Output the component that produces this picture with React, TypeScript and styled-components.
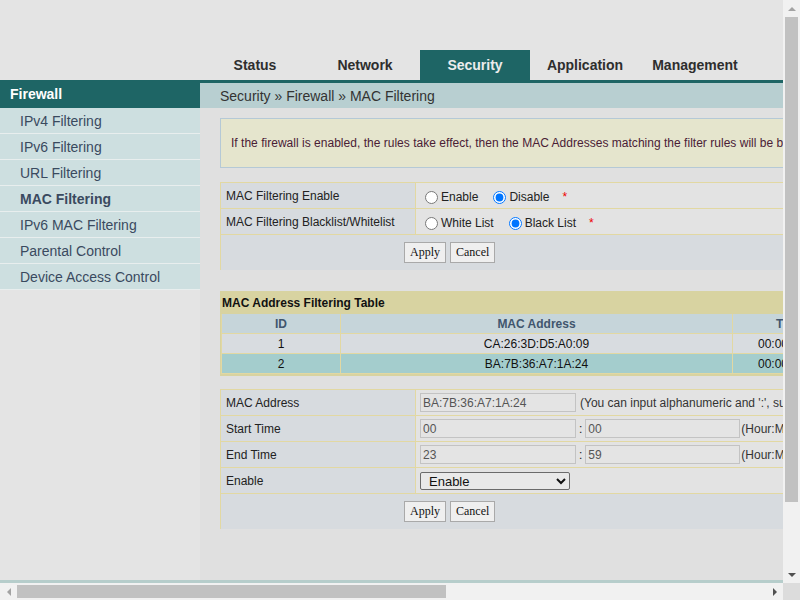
import React from 'react'
import styled, { createGlobalStyle } from 'styled-components'

const TEAL = '#1e6565'
const TAN = '#e2d8a2'

const GlobalStyle = createGlobalStyle`
  html, body {
    margin: 0;
    padding: 0;
    overflow: hidden;
  }
  body {
    background: #e4e4e4;
    font-family: 'Liberation Sans', Arial, sans-serif;
    font-size: 12px;
    color: #222;
  }
`

/* window frame: visible page + classic scrollbars */
const Frame = styled.div`
  width: 800px;
  height: 600px;
  display: grid;
  grid-template-columns: 783px 17px;
  grid-template-rows: 583px 17px;
`

const Viewport = styled.div`
  overflow: hidden;
`

const VScroll = styled.div`
  background: #f1f1f1;
  display: flex;
  flex-direction: column;
`

const HScroll = styled.div`
  background: #f1f1f1;
  display: flex;
`

const Corner = styled.div`
  background: #dcdcdc;
`

const ArrowBtn = styled.div`
  width: 17px;
  height: 17px;
  flex-shrink: 0;
  display: flex;
  align-items: center;
  justify-content: center;
`

const VTrack = styled.div`
  flex: 1;
  padding: 0 2px;
`

const HTrack = styled.div`
  flex: 1;
  padding: 2px 0;
`

const VThumb = styled.div<{ $len: number }>`
  height: ${({ $len }) => $len}px;
  background: #c1c1c1;
`

const HThumb = styled.div<{ $len: number }>`
  width: ${({ $len }) => $len}px;
  height: 100%;
  background: #c1c1c1;
`

const Page = styled.div`
  width: 1377px;
  display: flex;
  flex-direction: column;
`

const LogoBar = styled.div`
  height: 50px;
`

const NavBar = styled.div`
  display: flex;
  height: 30px;
  padding-left: 200px;
`

const NavTab = styled.div<{ $active?: boolean }>`
  width: 110px;
  display: flex;
  align-items: center;
  justify-content: center;
  font-size: 14px;
  font-weight: bold;
  color: ${({ $active }) => ($active ? '#ececec' : '#2e2e2e')};
  background: ${({ $active }) => ($active ? TEAL : 'transparent')};
`

const Body = styled.div`
  display: flex;
  min-height: 500px;
`

const Sidebar = styled.div`
  width: 200px;
  flex-shrink: 0;
  background: #e4e4e4;
`

const SideHeader = styled.div`
  height: 28px;
  background: ${TEAL};
  color: #fff;
  font-weight: bold;
  font-size: 14px;
  padding-left: 10px;
  display: flex;
  align-items: center;
`

const SideItem = styled.div<{ $active?: boolean }>`
  height: 25px;
  border-bottom: 1px solid #e8eeee;
  background: #cddfe0;
  padding-left: 20px;
  display: flex;
  align-items: center;
  font-size: 14px;
  color: #3a4a5f;
  font-weight: ${({ $active }) => ($active ? 'bold' : 'normal')};
`

const Main = styled.div`
  flex: 1;
  background: #e0e0e0;
  border-top: 3px solid ${TEAL};
  padding-bottom: 50px;
`

const Crumb = styled.div`
  height: 25px;
  background: #b8cfd1;
  padding-left: 20px;
  display: flex;
  align-items: center;
  font-size: 14px;
  color: #333;
`

const Content = styled.div`
  padding: 10px 20px 0;
  display: flex;
  flex-direction: column;
`

const InfoBox = styled.div`
  height: 48px;
  border: 1px solid #b5c9d6;
  background: #e5e5cd;
  color: #4a2035;
  padding-left: 10px;
  display: flex;
  align-items: center;
  letter-spacing: 0.02px;
`

const FormGrid = styled.div<{ $gap: number }>`
  margin-top: ${({ $gap }) => $gap}px;
  display: grid;
  grid-template-columns: 195px 1fr;
  border-top: 1px solid ${TAN};
  border-left: 1px solid ${TAN};
`

const LabelCell = styled.div`
  height: 26px;
  box-sizing: border-box;
  border-bottom: 1px solid ${TAN};
  border-right: 1px solid ${TAN};
  background: #d7dbdf;
  padding-left: 5px;
  display: flex;
  align-items: center;
`

const ValueCell = styled.div`
  height: 26px;
  box-sizing: border-box;
  border-bottom: 1px solid ${TAN};
  background: #e3e3e3;
  padding-left: 4px;
  display: flex;
  align-items: center;
  white-space: nowrap;
`

const RadioLabel = styled.label`
  display: inline-flex;
  align-items: center;
  margin-right: 10px;
  padding-top: 3px;
  input {
    margin: 0 3px 0 5px;
  }
`

const Star = styled.span`
  color: #e00;
  margin-left: 3px;
  padding-top: 3px;
`

const ButtonRow = styled.div`
  grid-column: 1 / -1;
  height: 35px;
  background: #d7dbdf;
  padding-left: 183px;
  display: flex;
  align-items: center;
  gap: 4px;
`

const Btn = styled.button`
  height: 21px;
  padding: 0 5px;
  border: 1px solid #a9a9a9;
  background: #efefef;
  font-family: 'Liberation Serif', 'Times New Roman', serif;
  font-size: 12px;
  color: #111;
`

const MacBox = styled.div`
  margin-top: 21px;
  background: #d8d3a1;
  padding: 0 0 2px 1px;
`

const MacTitle = styled.div`
  height: 23px;
  padding-left: 1px;
  display: flex;
  align-items: center;
  font-weight: bold;
  color: #111;
`

const MacTable = styled.table`
  width: 100%;
  border-collapse: collapse;
  table-layout: fixed;
`

const HeadCell = styled.th<{ $w?: number }>`
  width: ${({ $w }) => ($w ? `${$w}px` : 'auto')};
  height: 19px;
  padding: 0;
  border: 1px solid ${TAN};
  border-top: none;
  background: #c6d5da;
  color: #41566e;
  font-weight: bold;
  text-align: center;
`

const DataRow = styled.tr<{ $selected?: boolean }>`
  background: ${({ $selected }) => ($selected ? '#a4cdcd' : '#d8dce0')};
`

const DataCell = styled.td`
  height: 19px;
  padding: 0;
  border: 1px solid ${TAN};
  text-align: center;
  color: #111;
`

const TextInput = styled.input<{ $w: number }>`
  width: ${({ $w }) => $w}px;
  height: 19px;
  box-sizing: border-box;
  margin: 0;
  padding: 0 2px;
  border: 1px solid #c3c3c3;
  background: #e4e4e4;
  color: #555;
  font-family: 'Liberation Sans', Arial, sans-serif;
  font-size: 12px;
  outline: none;
`

const Hint = styled.span<{ $tight?: boolean }>`
  margin-left: ${({ $tight }) => ($tight ? 1 : 4)}px;
  color: #333;
`

const Colon = styled.span`
  margin: 0 3px;
`

const Select = styled.select`
  width: 150px;
  height: 18px;
  margin: 0;
  border: 1px solid #6b6b6b;
  border-radius: 2px;
  background: #e9e9e9;
  color: #111;
  font-family: 'Liberation Sans', Arial, sans-serif;
  font-size: 13px;
  padding: 0 4px;
`

const Footer = styled.div`
  height: 84px;
  box-sizing: border-box;
  border-top: 3px solid #b6cdcb;
  background: #e4e4e4;
`

const tabs = ['Status', 'Network', 'Security', 'Application', 'Management']
const menu = [
  'IPv4 Filtering',
  'IPv6 Filtering',
  'URL Filtering',
  'MAC Filtering',
  'IPv6 MAC Filtering',
  'Parental Control',
  'Device Access Control',
]
const rules = [
  { id: 1, mac: 'CA:26:3D:D5:A0:09', time: '00:00-23:59' },
  { id: 2, mac: 'BA:7B:36:A7:1A:24', time: '00:00-23:59' },
]

const noop = () => {}

type Dir = 'up' | 'down' | 'left' | 'right'
const arrowPts: Record<Dir, string> = {
  up: '0,4 4,0 8,4',
  down: '0,0 8,0 4,4',
  left: '4,0 4,8 0,4',
  right: '0,0 0,8 4,4',
}

const Arrow = ({ dir, active }: { dir: Dir; active?: boolean }) => {
  const vertical = dir === 'up' || dir === 'down'
  return (
    <ArrowBtn>
      <svg width={vertical ? 8 : 4} height={vertical ? 4 : 8} viewBox={vertical ? '0 0 8 4' : '0 0 4 8'}>
        <polygon points={arrowPts[dir]} fill={active ? '#505050' : '#a3a3a3'} />
      </svg>
    </ArrowBtn>
  )
}

export default function App() {
  return (
    <>
      <GlobalStyle />
      <Frame>
        <Viewport>
          <Page>
            <LogoBar />
            <NavBar>
              {tabs.map((t) => (
                <NavTab key={t} $active={t === 'Security'}>
                  {t}
                </NavTab>
              ))}
            </NavBar>
            <Body>
              <Sidebar>
                <SideHeader>Firewall</SideHeader>
                {menu.map((m) => (
                  <SideItem key={m} $active={m === 'MAC Filtering'}>
                    {m}
                  </SideItem>
                ))}
              </Sidebar>
              <Main>
                <Crumb>Security » Firewall » MAC Filtering</Crumb>
                <Content>
                  <InfoBox>
                    If the firewall is enabled, the rules take effect, then the MAC Addresses matching the filter rules will be banned from accessing the Internet.
                  </InfoBox>

                  <FormGrid $gap={14}>
                    <LabelCell>MAC Filtering Enable</LabelCell>
                    <ValueCell>
                      <RadioLabel>
                        <input type="radio" name="en" checked={false} onChange={noop} />
                        Enable
                      </RadioLabel>
                      <RadioLabel>
                        <input type="radio" name="en" checked onChange={noop} />
                        Disable
                      </RadioLabel>
                      <Star>*</Star>
                    </ValueCell>
                    <LabelCell>MAC Filtering Blacklist/Whitelist</LabelCell>
                    <ValueCell>
                      <RadioLabel>
                        <input type="radio" name="mode" checked={false} onChange={noop} />
                        White List
                      </RadioLabel>
                      <RadioLabel>
                        <input type="radio" name="mode" checked onChange={noop} />
                        Black List
                      </RadioLabel>
                      <Star>*</Star>
                    </ValueCell>
                    <ButtonRow>
                      <Btn>Apply</Btn>
                      <Btn>Cancel</Btn>
                    </ButtonRow>
                  </FormGrid>

                  <MacBox>
                    <MacTitle>MAC Address Filtering Table</MacTitle>
                    <MacTable>
                      <thead>
                        <tr>
                          <HeadCell $w={118}>ID</HeadCell>
                          <HeadCell $w={391}>MAC Address</HeadCell>
                          <HeadCell $w={114}>Time</HeadCell>
                          <HeadCell $w={200}>Enable</HeadCell>
                          <HeadCell>Modify</HeadCell>
                        </tr>
                      </thead>
                      <tbody>
                        {rules.map((r) => (
                          <DataRow key={r.id} $selected={r.id === 2}>
                            <DataCell>{r.id}</DataCell>
                            <DataCell>{r.mac}</DataCell>
                            <DataCell>{r.time}</DataCell>
                            <DataCell>Enable</DataCell>
                            <DataCell>Edit</DataCell>
                          </DataRow>
                        ))}
                      </tbody>
                    </MacTable>
                  </MacBox>

                  <FormGrid $gap={13}>
                    <LabelCell>MAC Address</LabelCell>
                    <ValueCell>
                      <TextInput $w={156} value="BA:7B:36:A7:1A:24" onChange={noop} />
                      <Hint>(You can input alphanumeric and ':', such as 00:1E:90:12:34:56.)</Hint>
                    </ValueCell>
                    <LabelCell>Start Time</LabelCell>
                    <ValueCell>
                      <TextInput $w={156} value="00" onChange={noop} />
                      <Colon>:</Colon>
                      <TextInput $w={155} value="00" onChange={noop} />
                      <Hint $tight>(Hour:Minute)</Hint>
                    </ValueCell>
                    <LabelCell>End Time</LabelCell>
                    <ValueCell>
                      <TextInput $w={156} value="23" onChange={noop} />
                      <Colon>:</Colon>
                      <TextInput $w={155} value="59" onChange={noop} />
                      <Hint $tight>(Hour:Minute)</Hint>
                    </ValueCell>
                    <LabelCell>Enable</LabelCell>
                    <ValueCell>
                      <Select defaultValue="Enable">
                        <option>Enable</option>
                        <option>Disable</option>
                      </Select>
                    </ValueCell>
                    <ButtonRow>
                      <Btn>Apply</Btn>
                      <Btn>Cancel</Btn>
                    </ButtonRow>
                  </FormGrid>
                </Content>
              </Main>
            </Body>
            <Footer />
          </Page>
        </Viewport>
        <VScroll>
          <Arrow dir="up" />
          <VTrack>
            <VThumb $len={485} />
          </VTrack>
          <Arrow dir="down" active />
        </VScroll>
        <HScroll>
          <Arrow dir="left" />
          <HTrack>
            <HThumb $len={429} />
          </HTrack>
          <Arrow dir="right" active />
        </HScroll>
        <Corner />
      </Frame>
    </>
  )
}
